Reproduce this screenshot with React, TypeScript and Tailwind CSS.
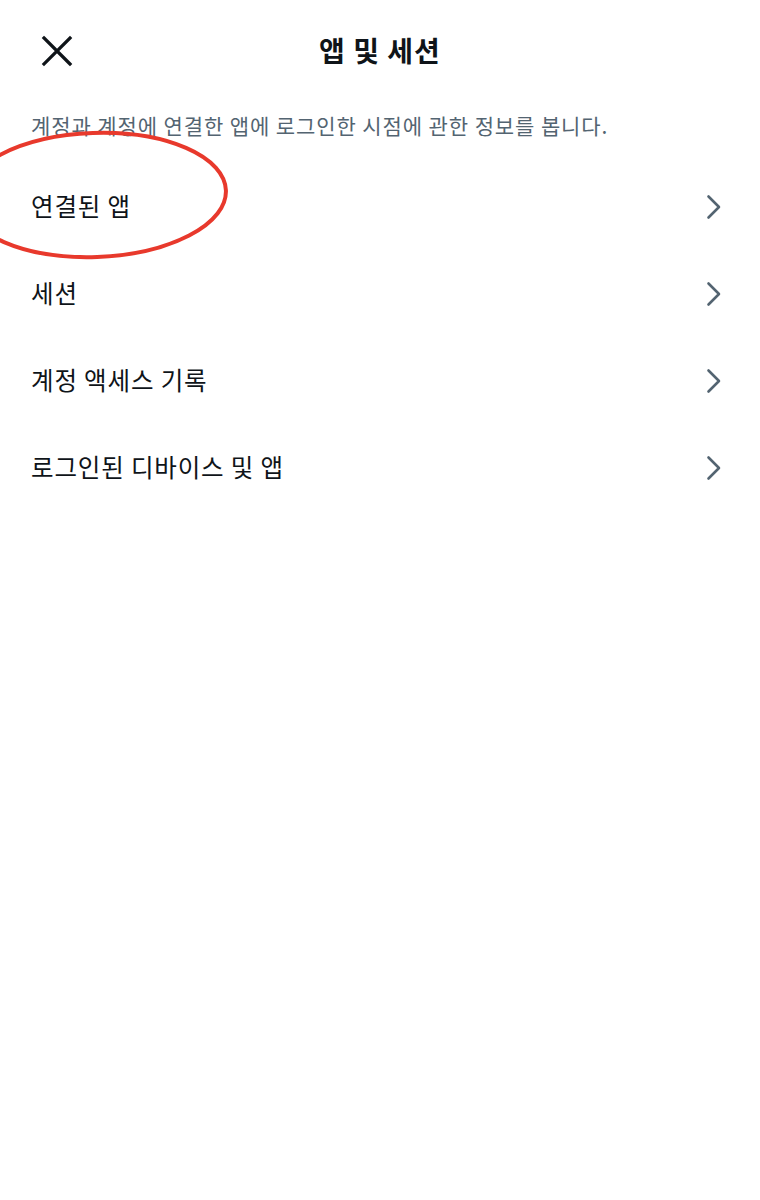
import React from 'react';

const font = { fontFamily: '"Noto Sans CJK KR", "Noto Sans", sans-serif' };

const items = ['연결된 앱', '세션', '계정 액세스 기록', '로그인된 디바이스 및 앱'];

const Chevron = () => (
  <svg width="16" height="26" viewBox="0 0 16 26" fill="none" className="shrink-0">
    <path d="M2.5 2.5 L13 13 L2.5 23.5" stroke="#536471" strokeWidth="2.6" strokeLinecap="round" strokeLinejoin="round" />
  </svg>
);

export default function App() {
  return (
    <div className="relative w-[760px] h-[1200px] bg-white overflow-hidden text-[#0f1419]" style={font}>
      <header className="relative h-[100px] flex items-center justify-center">
        <button className="absolute left-[36px] top-[30px] w-[42px] h-[42px] flex items-center justify-center">
          <svg width="32" height="32" viewBox="0 0 32 32" fill="none">
            <path d="M3 3 L29 29 M29 3 L3 29" stroke="#0f1419" strokeWidth="3.2" strokeLinecap="square" />
          </svg>
        </button>
        <h1 className="text-[28px] font-bold leading-none tracking-[1px]">앱 및 세션</h1>
      </header>

      <p className="pl-[31px] pt-[8px] pb-[21px] text-[21px] leading-[34px] tracking-[0.9px] text-[#536471]">
        계정과 계정에 연결한 앱에 로그인한 시점에 관한 정보를 봅니다.
      </p>

      <ul>
        {items.map(item => (
          <li key={item} className="h-[87px] flex items-center justify-between pl-[31px] pr-[38px]">
            <span className="text-[24.5px] leading-none tracking-[0.85px]">{item}</span>
            <Chevron />
          </li>
        ))}
      </ul>

      <svg className="absolute left-0 top-0 pointer-events-none" width="760" height="300" viewBox="0 0 760 300">
        <ellipse cx="95" cy="195" rx="131" ry="62" fill="none" stroke="#e8392c" strokeWidth="4" transform="rotate(-2 95 195)" />
      </svg>
    </div>
  );
}
